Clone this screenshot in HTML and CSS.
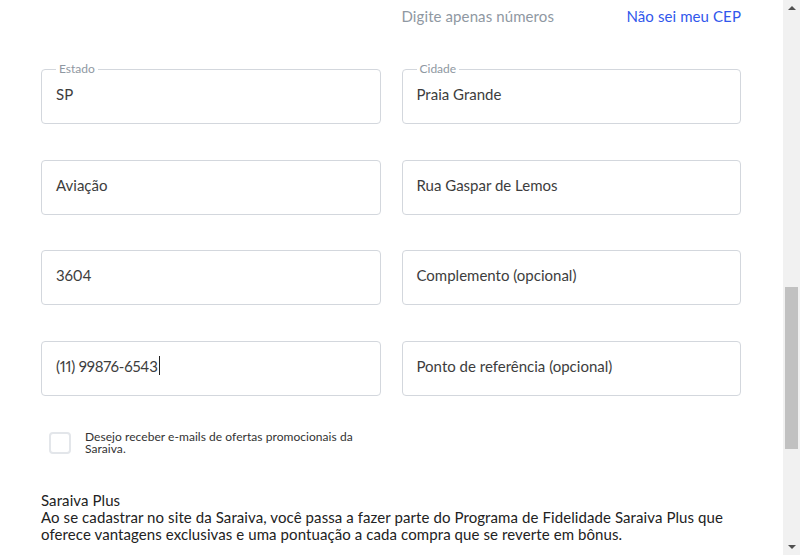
FILE: index.html
```html
<!DOCTYPE html>
<html lang="pt-BR">
<head>
<meta charset="utf-8">
<link rel="stylesheet" href="styles.css">
</head>
<body>
<div class="window">
  <main class="page">
    <div class="hint-row">
      <span class="hint">Digite apenas números</span>
      <a class="link" href="#">Não sei meu CEP</a>
    </div>
    <div class="grid">
      <div class="field"><span class="legend">Estado</span><span class="value">SP</span></div>
      <div class="field"><span class="legend">Cidade</span><span class="value">Praia Grande</span></div>
      <div class="field"><span class="value">Aviação</span></div>
      <div class="field"><span class="value">Rua Gaspar de Lemos</span></div>
      <div class="field"><span class="value num">3604</span></div>
      <div class="field"><span class="value">Complemento (opcional)</span></div>
      <div class="field"><span class="value num">(11) 99876-6543<span class="caret"></span></span></div>
      <div class="field"><span class="value">Ponto de referência (opcional)</span></div>
    </div>
    <label class="check">
      <span class="box"></span>
      <span class="check-text">Desejo receber e-mails de ofertas promocionais da Saraiva.</span>
    </label>
    <section class="plus">
      <p>Saraiva Plus</p>
      <p>Ao se cadastrar no site da Saraiva, você passa a fazer parte do Programa de Fidelidade Saraiva Plus que oferece vantagens exclusivas e uma pontuação a cada compra que se reverte em bônus.</p>
    </section>
  </main>
  <div class="scrollbar">
    <span class="arrow up"></span>
    <span class="track"><span class="thumb"></span></span>
    <span class="arrow down"></span>
  </div>
</div>
</body>
</html>
```
FILE: styles.css
```css
html, body {
  margin: 0;
  padding: 0;
  height: 100%;
  overflow: hidden;
  background: #fff;
}
body {
  font-family: "Lato", "Open Sans", sans-serif;
  color: #3d3d3d;
}
.window {
  display: flex;
  height: 555px;
}
.page {
  flex: 1;
  padding: 0 42px 0 41px;
  overflow: hidden;
}
.hint-row {
  display: grid;
  grid-template-columns: 1fr 1fr;
  column-gap: 21px;
  height: 32px;
  align-items: center;
  font-size: 15px;
  letter-spacing: 0.1px;
}
.hint {
  grid-column: 2;
  grid-row: 1;
  color: #8f98a2;
}
.link {
  grid-column: 2;
  grid-row: 1;
  justify-self: end;
  color: #3157ec;
  text-decoration: none;
}
.grid {
  margin-top: 37px;
  display: grid;
  grid-template-columns: 1fr 1fr;
  column-gap: 21px;
  row-gap: 35.67px;
}
.field {
  position: relative;
  height: 55px;
  box-sizing: border-box;
  border: 1px solid #d3d7dd;
  border-radius: 4px;
  padding: 0 14px 5px;
  display: flex;
  align-items: center;
  font-size: 15px;
}
.legend {
  position: absolute;
  top: -8px;
  left: 14px;
  padding: 0 3px;
  background: #fff;
  font-size: 12px;
  line-height: 14px;
  color: #8f98a2;
}
.value {
  display: inline-flex;
  align-items: center;
}
.num {
  font-variant-numeric: proportional-nums;
  letter-spacing: -0.2px;
}
.caret {
  display: inline-block;
  width: 1px;
  height: 19px;
  background: #222;
  margin-left: 1px;
}
.check {
  display: flex;
  align-items: center;
  gap: 14px;
  margin: 35px 0 0 8px;
  width: 320px;
}
.box {
  flex: none;
  width: 18px;
  height: 18px;
  border: 2px solid #e3e6ea;
  border-radius: 4px;
}
.check-text {
  font-size: 12px;
  line-height: 12px;
  color: #333;
  letter-spacing: 0.05px;
}
.plus {
  margin-top: 37px;
  font-size: 15px;
  line-height: 17px;
  color: #222;
  letter-spacing: 0.09px;
}
.plus p { margin: 0; }
.scrollbar {
  width: 17px;
  flex: none;
  background: #f1f1f1;
  display: flex;
  flex-direction: column;
  align-items: center;
}
.arrow {
  width: 0;
  height: 0;
  border-left: 4px solid transparent;
  border-right: 4px solid transparent;
  margin: 6px 0;
}
.up { border-bottom: 4px solid #505050; }
.down { border-top: 4px solid #505050; }
.track {
  flex: 1;
  width: 100%;
  display: flex;
  flex-direction: column;
  align-items: center;
  padding-top: 271px;
}
.thumb {
  width: 13px;
  height: 162px;
  background: #c1c1c1;
}
```
